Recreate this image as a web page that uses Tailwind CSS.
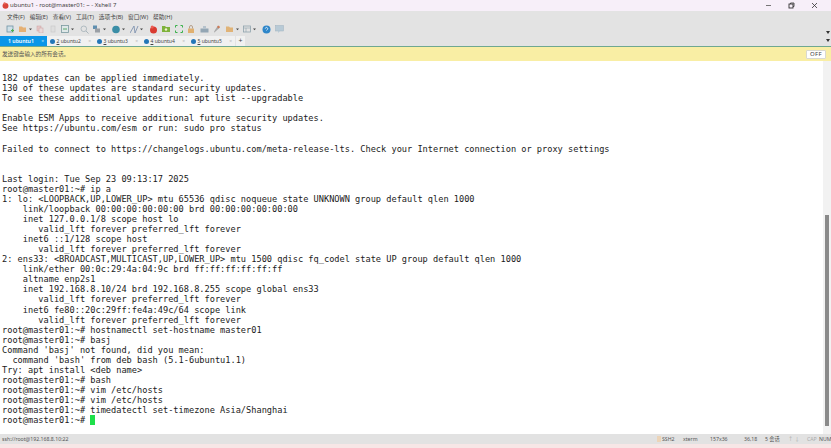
<!DOCTYPE html>
<html><head><meta charset="utf-8"><script src="https://cdn.jsdelivr.net/npm/@tailwindcss/browser@4"></script></head>
<body class="m-0 overflow-hidden bg-white">
<div class="w-[831px] h-[448px] flex flex-col overflow-hidden font-['Noto_Sans','Noto_Sans_CJK_SC',sans-serif] text-[#333]">
  <!-- title bar -->
  <div class="h-[11px] bg-[#f7eff9] flex items-center pl-[2px] shrink-0">
    <svg width="7" height="7" viewBox="0 0 8 8" class="mr-[1px]"><circle cx="4" cy="4.4" r="3.4" fill="#d9423a"/><circle cx="3" cy="1.6" r="1.3" fill="#e8665c"/></svg>
    <span class="text-[6px] leading-[11px] text-[#444]">ubuntu1 - root@master01: ~ - Xshell 7</span>
    <div class="ml-auto flex items-center gap-[16px] pr-[13px]">
      <svg width="7" height="7" viewBox="0 0 7 7"><path d="M1 3.5H6" stroke="#555" stroke-width=".8"/></svg>
      <svg width="7" height="7" viewBox="0 0 7 7" fill="none"><rect x="1" y="2" width="4" height="4" stroke="#333" stroke-width=".9"/><path d="M2.5 2V1H6V4.5H5" stroke="#333" stroke-width=".8"/></svg>
      <svg width="7" height="7" viewBox="0 0 7 7"><path d="M1 1L6 6M6 1L1 6" stroke="#333" stroke-width=".8"/></svg>
    </div>
  </div>
  <!-- menu -->
  <div class="h-[12px] bg-[#e3e3e3] flex items-center gap-[5px] pl-[7px] text-[5.7px] leading-[12px] text-[#444] shrink-0">
    <span>文件(F)</span><span>编辑(E)</span><span>查看(V)</span><span>工具(T)</span><span>选项卡(B)</span><span>窗口(W)</span><span>帮助(H)</span>
  </div>
  <!-- toolbar -->
  <div class="h-[12px] bg-[#e3e3e3] flex items-center pl-[6px] shrink-0 relative">
    <div class="flex items-center gap-[4.5px]">
      <svg width="8" height="8" viewBox="0 0 8 8"><rect x="1" y="1" width="6" height="6" fill="#cfe0e8" stroke="#6f93a5" stroke-width=".8"/><path d="M5 5.5H8M6.5 4V7" stroke="#4caf50"/></svg>
      <svg width="13" height="8" viewBox="0 0 13 8"><path d="M0 1.5H3L4 2.5H7V7H0Z" fill="#e5b074"/><path d="M10 3.5h3l-1.500 1.800z" fill="#444"/></svg>
      <svg width="8" height="8" viewBox="0 0 8 8"><rect x="1" y="1" width="4" height="5" fill="#e8c8c8" stroke="#c9a0a0" stroke-width=".5"/><rect x="3" y="3" width="4" height="5" fill="#e9d9d9" stroke="#c9a0a0" stroke-width=".5"/></svg>
      <svg width="8" height="8" viewBox="0 0 8 8"><rect x="2" y="1" width="4" height="6" fill="#dedede" stroke="#c5c5c5" stroke-width=".6"/></svg>
      <svg width="14" height="8" viewBox="0 0 14 8"><rect x="0.500" y="0.500" width="7" height="7" fill="#dfe8e8" stroke="#7a9aa0" stroke-width=".8"/><path d="M2 4h4" stroke="#59a86b"/><path d="M10 3.500h3l-1.500 1.800z" fill="#444"/></svg>
      <svg width="9" height="9" viewBox="0 0 9 9" fill="none"><circle cx="3.800" cy="3.800" r="2.800" stroke="#a9b5bb" stroke-width=".9"/><path d="M6 6L8.500 8.500" stroke="#a9b5bb"/></svg>
      <svg width="14" height="8" viewBox="0 0 14 8"><rect x="0" y="0.500" width="4" height="3.500" fill="#5f8fb0"/><rect x="2" y="3.500" width="5" height="4" fill="#9a9fa5"/><path d="M10 3.500h3l-1.500 1.800z" fill="#444"/></svg>
      <svg width="14" height="9" viewBox="0 0 14 9"><circle cx="4" cy="4.500" r="3.800" fill="#3a8ea6"/><path d="M10 3.500h3l-1.500 1.800z" fill="#444"/></svg>
      <svg width="14" height="9" viewBox="0 0 14 9" fill="none"><path d="M0 8L4 1L5 8L8 1" stroke="#7f93b0" stroke-width=".9"/><path d="M10 3.500h3l-1.500 1.800z" fill="#444"/></svg>
      <svg width="9" height="9" viewBox="0 0 9 9"><circle cx="4.500" cy="5" r="3.500" fill="#d93a30"/><circle cx="3.200" cy="2" r="1.500" fill="#ea5f55"/></svg>
      <svg width="8" height="8" viewBox="0 0 8 8"><path d="M0 1H3L4 2H8V7H0Z" fill="#7eb23a"/><circle cx="4" cy="4.500" r="1.200" fill="#f4f4d0"/></svg>
      <svg width="8" height="8" viewBox="0 0 8 8" fill="none" stroke="#39b14a" stroke-width="1"><path d="M0.500 2.500V0.500H2.500M5.500 0.500H7.500V2.500M7.500 5.500V7.500H5.500M2.500 7.500H0.500V5.500"/></svg>
      <svg width="8" height="8" viewBox="0 0 8 8"><rect x="1" y="3.500" width="6" height="4.500" fill="#e0b070"/><path d="M2.500 3.500V2A1.500 1.500 0 0 1 5.500 2V3.500" fill="none" stroke="#b5a08a"/></svg>
      <svg width="9" height="8" viewBox="0 0 9 8"><rect x="0.500" y="3.500" width="8" height="4" fill="#93a6b4"/><rect x="3" y="1" width="3" height="3" fill="#b5c2cc"/></svg>
      <svg width="8" height="8" viewBox="0 0 8 8"><path d="M5 0.500L7 2.500L3 6L1.500 7.500L1 7L2 5Z" fill="#a9a9a9"/><circle cx="5.500" cy="2" r="1.200" fill="#d07a55"/></svg>
      <svg width="13" height="8" viewBox="0 0 13 8"><path d="M0 1.500H3L4 2.500H7V7H0Z" fill="#e0b377"/><path d="M10 3.500h3l-1.500 1.800z" fill="#444"/></svg>
      <svg width="14" height="8" viewBox="0 0 14 8" fill="none"><rect x="0.500" y="1" width="7" height="6" stroke="#8fa3ad" stroke-width=".8"/><path d="M0.500 3H7.500M3 3V7" stroke="#8fa3ad" stroke-width=".6"/><path d="M10 3.500h3l-1.500 1.800z" fill="#444"/></svg>
      <svg width="9" height="9" viewBox="0 0 9 9"><circle cx="4.500" cy="4.500" r="4" fill="#2e86c9"/><path d="M3.300 3.500a1.200 1.200 0 1 1 1.700 1.200L4.500 5.500" stroke="#fff" fill="none" stroke-width=".8"/></svg>
      <svg width="9" height="8" viewBox="0 0 9 8"><rect x="0.500" y="0.500" width="8" height="5.500" fill="#b8cad6" stroke="#9fb2bf" stroke-width=".5"/><path d="M3 6V8L5 6Z" fill="#b8cad6"/></svg>
    </div>
    <span class="absolute right-[1px] bottom-[1px] w-0 h-0 border-l-[2px] border-r-[2px] border-t-[3px] border-l-transparent border-r-transparent border-t-[#333]"></span>
  </div>
  <!-- tabs -->
  <div class="h-[11px] bg-[#e3e3e3] flex items-end shrink-0 relative text-[5px] leading-[10px] whitespace-nowrap">
    <div class="w-[47px] h-[10px] bg-[#0b96e8] text-white flex items-center pl-[8px] pr-[3px]"><span class="font-semibold text-[5.2px]">1 ubuntu1</span><span class="ml-auto text-[5px] text-[#bfe3f7]">×</span></div>
    <div class="w-[47px] h-[10px] bg-[#f1f1f1] flex items-center pl-[3px] pr-[3px] gap-[1.5px] text-[#444]"><span class="w-[5px] h-[5px] rounded-full bg-[#2376b8]"></span><span><u>2</u> ubuntu2</span><span class="ml-auto text-[5px] text-[#bbb]">×</span></div>
    <div class="w-[47px] h-[10px] bg-[#f1f1f1] flex items-center pl-[3px] pr-[3px] gap-[1.5px] text-[#444]"><span class="w-[5px] h-[5px] rounded-full bg-[#2376b8]"></span><span><u>3</u> ubuntu3</span><span class="ml-auto text-[5px] text-[#bbb]">×</span></div>
    <div class="w-[47px] h-[10px] bg-[#f1f1f1] flex items-center pl-[3px] pr-[3px] gap-[1.5px] text-[#444]"><span class="w-[5px] h-[5px] rounded-full bg-[#2376b8]"></span><span><u>4</u> ubuntu4</span><span class="ml-auto text-[5px] text-[#bbb]">×</span></div>
    <div class="w-[47px] h-[10px] bg-[#f1f1f1] flex items-center pl-[3px] pr-[3px] gap-[1.5px] text-[#444]"><span class="w-[5px] h-[5px] rounded-full bg-[#2376b8]"></span><span><u>5</u> ubuntu5</span><span class="ml-auto text-[5px] text-[#bbb]">×</span></div>
    <div class="w-[9px] h-[10px] bg-[#f1f1f1] ml-[1px] flex items-center justify-center text-[7px] text-[#444]">+</div>
    <span class="absolute right-[1px] top-[4px] w-0 h-0 border-l-[2px] border-r-[2px] border-t-[3px] border-l-transparent border-r-transparent border-t-[#333]"></span>
  </div>
  <div class="h-[1px] bg-[#6fa890] shrink-0"></div>
  <!-- send bar -->
  <div class="h-[14px] bg-[#f9eea4] flex items-center pl-[2px] pr-[5px] text-[5.6px] text-[#555] shrink-0">
    <span>发送键盘输入的所有会话。</span>
    <span class="ml-auto h-[9px] w-[20px] bg-white border border-[#d9d9d0] rounded-[1px] flex items-center justify-center text-[6px] leading-none tracking-[.3px] text-[#444]">OFF</span>
  </div>
  <!-- terminal -->
  <div class="flex-1 min-h-0 flex bg-white">
    <pre class="flex-1 pt-[2px] pl-[2px] font-['DejaVu_Sans_Mono',monospace] text-[8.64px] leading-[10.06px] text-[#1a1a1a] overflow-hidden">

182 updates can be applied immediately.
130 of these updates are standard security updates.
To see these additional updates run: apt list --upgradable

Enable ESM Apps to receive additional future security updates.
See https://ubuntu.com/esm or run: sudo pro status

Failed to connect to https://changelogs.ubuntu.com/meta-release-lts. Check your Internet connection or proxy settings


Last login: Tue Sep 23 09:13:17 2025
root@master01:~# ip a
1: lo: &lt;LOOPBACK,UP,LOWER_UP&gt; mtu 65536 qdisc noqueue state UNKNOWN group default qlen 1000
    link/loopback 00:00:00:00:00:00 brd 00:00:00:00:00:00
    inet 127.0.0.1/8 scope host lo
       valid_lft forever preferred_lft forever
    inet6 ::1/128 scope host
       valid_lft forever preferred_lft forever
2: ens33: &lt;BROADCAST,MULTICAST,UP,LOWER_UP&gt; mtu 1500 qdisc fq_codel state UP group default qlen 1000
    link/ether 00:0c:29:4a:04:9c brd ff:ff:ff:ff:ff:ff
    altname enp2s1
    inet 192.168.8.10/24 brd 192.168.8.255 scope global ens33
       valid_lft forever preferred_lft forever
    inet6 fe80::20c:29ff:fe4a:49c/64 scope link
       valid_lft forever preferred_lft forever
root@master01:~# hostnamectl set-hostname master01
root@master01:~# basj
Command 'basj' not found, did you mean:
  command 'bash' from deb bash (5.1-6ubuntu1.1)
Try: apt install &lt;deb name&gt;
root@master01:~# bash
root@master01:~# vim /etc/hosts
root@master01:~# vim /etc/hosts
root@master01:~# timedatectl set-timezone Asia/Shanghai
root@master01:~# <span class="inline-block align-top w-[5px] h-[10px] bg-[#1ee04a]"></span></pre>
    <div class="w-[8px] bg-[#f2f2f2] flex flex-col shrink-0 pt-[154px] pb-[8px] items-center">
      <div class="w-[4px] flex-1 bg-[#8a8a8a]"></div>
    </div>
  </div>
  <!-- status bar -->
  <div class="h-[10px] bg-[#e2e2e2] flex items-center pl-[2px] text-[5.2px] leading-[10px] text-[#555] shrink-0 whitespace-nowrap">
    <span>ssh://root@192.168.8.10:22</span>
    <div class="ml-auto flex items-center">
      <span class="w-[4px] h-[6px] bg-[#ecd4b8] mr-[1px]"></span>
      <span class="w-[21px]">SSH2</span>
      <span class="w-[27px]">xterm</span>
      <span class="w-[34px]">157x36</span>
      <span class="w-[21px]">36,18</span>
      <span class="w-[23px]">5 会话</span>
      <span class="w-[19px] text-[#aaa]">↑ ↓</span>
      <span class="w-[12px] text-[#aaa]">CAP</span>
      <span class="w-[12px]">NUM</span>
    </div>
  </div>
  <div class="h-[4px] bg-[#f7e6e6] shrink-0"></div>
</div>
</body></html>
